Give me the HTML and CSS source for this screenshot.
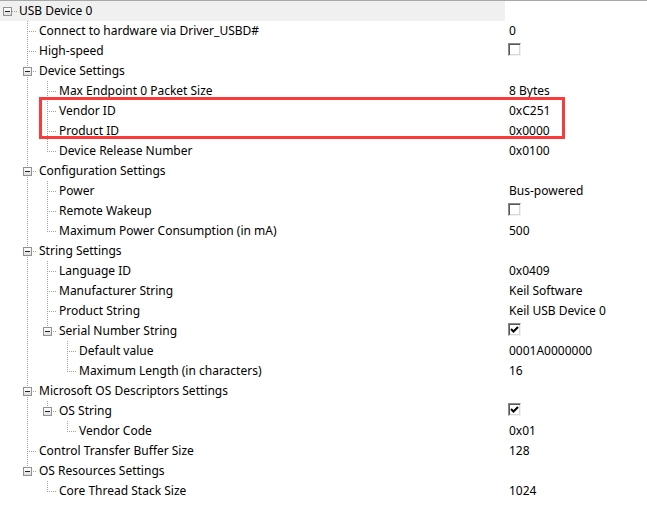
FILE: index.html
```html
<!DOCTYPE html>
<html>
<head>
<meta charset="utf-8">
<link rel="stylesheet" href="styles.css">
</head>
<body>
<div class="grid">
  <div class="row root">
    <div class="left"><span class="c0"><span class="box"></span></span><span class="lbl">USB Device 0</span></div>
    <div class="val"></div>
  </div>
  <div class="row"><div class="left"><span class="s0"></span><span class="n"></span><span class="lbl">Connect to hardware via Driver_USBD#</span></div><div class="val">0</div></div>
  <div class="row"><div class="left"><span class="s0"></span><span class="n"></span><span class="lbl">High-speed</span></div><div class="val"><span class="chk"></span></div></div>
  <div class="row"><div class="left"><span class="s0"></span><span class="n"><span class="box"></span></span><span class="lbl">Device Settings</span></div><div class="val"></div></div>
  <div class="row"><div class="left"><span class="s0"></span><span class="g v"></span><span class="n"></span><span class="lbl">Max Endpoint 0 Packet Size</span></div><div class="val">8 Bytes</div></div>
  <div class="row"><div class="left"><span class="s0"></span><span class="g v"></span><span class="n"></span><span class="lbl">Vendor ID</span></div><div class="val">0xC251</div></div>
  <div class="row"><div class="left"><span class="s0"></span><span class="g v"></span><span class="n"></span><span class="lbl">Product ID</span></div><div class="val">0x0000</div></div>
  <div class="row"><div class="left"><span class="s0"></span><span class="g v"></span><span class="n last"></span><span class="lbl">Device Release Number</span></div><div class="val">0x0100</div></div>
  <div class="row"><div class="left"><span class="s0"></span><span class="n"><span class="box"></span></span><span class="lbl">Configuration Settings</span></div><div class="val"></div></div>
  <div class="row"><div class="left"><span class="s0"></span><span class="g v"></span><span class="n"></span><span class="lbl">Power</span></div><div class="val">Bus-powered</div></div>
  <div class="row"><div class="left"><span class="s0"></span><span class="g v"></span><span class="n"></span><span class="lbl">Remote Wakeup</span></div><div class="val"><span class="chk"></span></div></div>
  <div class="row"><div class="left"><span class="s0"></span><span class="g v"></span><span class="n last"></span><span class="lbl">Maximum Power Consumption (in mA)</span></div><div class="val">500</div></div>
  <div class="row"><div class="left"><span class="s0"></span><span class="n"><span class="box"></span></span><span class="lbl">String Settings</span></div><div class="val"></div></div>
  <div class="row"><div class="left"><span class="s0"></span><span class="g v"></span><span class="n"></span><span class="lbl">Language ID</span></div><div class="val">0x0409</div></div>
  <div class="row"><div class="left"><span class="s0"></span><span class="g v"></span><span class="n"></span><span class="lbl">Manufacturer String</span></div><div class="val">Keil Software</div></div>
  <div class="row"><div class="left"><span class="s0"></span><span class="g v"></span><span class="n"></span><span class="lbl">Product String</span></div><div class="val">Keil USB Device 0</div></div>
  <div class="row"><div class="left"><span class="s0"></span><span class="g v"></span><span class="n last"><span class="box"></span></span><span class="lbl">Serial Number String</span></div><div class="val"><span class="chk on"><svg width="9" height="9" viewBox="0 0 9 9"><path d="M1 4 L3.5 6.5 L8 2" fill="none" stroke="#000" stroke-width="2"/></svg></span></div></div>
  <div class="row"><div class="left"><span class="s0"></span><span class="g v"></span><span class="g"></span><span class="n"></span><span class="lbl">Default value</span></div><div class="val">0001A0000000</div></div>
  <div class="row"><div class="left"><span class="s0"></span><span class="g v"></span><span class="g"></span><span class="n last"></span><span class="lbl">Maximum Length (in characters)</span></div><div class="val">16</div></div>
  <div class="row"><div class="left"><span class="s0"></span><span class="n"><span class="box"></span></span><span class="lbl">Microsoft OS Descriptors Settings</span></div><div class="val"></div></div>
  <div class="row"><div class="left"><span class="s0"></span><span class="g v"></span><span class="n last"><span class="box"></span></span><span class="lbl">OS String</span></div><div class="val"><span class="chk on"><svg width="9" height="9" viewBox="0 0 9 9"><path d="M1 4 L3.5 6.5 L8 2" fill="none" stroke="#000" stroke-width="2"/></svg></span></div></div>
  <div class="row"><div class="left"><span class="s0"></span><span class="g v"></span><span class="g"></span><span class="n last"></span><span class="lbl">Vendor Code</span></div><div class="val">0x01</div></div>
  <div class="row"><div class="left"><span class="s0"></span><span class="n"></span><span class="lbl">Control Transfer Buffer Size</span></div><div class="val">128</div></div>
  <div class="row"><div class="left"><span class="s0"></span><span class="n last"><span class="box"></span></span><span class="lbl">OS Resources Settings</span></div><div class="val"></div></div>
  <div class="row"><div class="left"><span class="s0"></span><span class="g"></span><span class="n last"></span><span class="lbl">Core Thread Stack Size</span></div><div class="val">1024</div></div>
  <div class="mark"></div>
</div>
</body>
</html>
```
FILE: styles.css
```css
html, body {
  margin: 0;
  padding: 0;
  background: #fff;
}
body {
  width: 647px;
  height: 523px;
  overflow: hidden;
  font-family: "Noto Sans", "Open Sans", sans-serif;
  font-size: 12px;
  color: #000;
}
.grid {
  position: relative;
  border-top: 1px solid #a8a8a8;
}
.row {
  display: grid;
  grid-template-columns: 505px 1fr;
  height: 20px;
  line-height: 20px;
}
.left {
  display: flex;
  align-items: flex-start;
  height: 20px;
  white-space: nowrap;
}
.root .left {
  background: #f0f0f0;
}
.val {
  padding-left: 4px;
  white-space: nowrap;
}
.lbl {
  padding-left: 2px;
}
.s0 {
  flex: none;
  width: 17px;
  height: 20px;
}
.c0 {
  flex: none;
  width: 17px;
  height: 20px;
  display: flex;
  background-image: repeating-linear-gradient(to right, #a0a0a0 0 1px, transparent 1px 2px);
  background-repeat: no-repeat;
  background-position: 12px 10px;
  background-size: 5px 1px;
}
.c0 .box {
  margin-left: 3px;
}
.g {
  flex: none;
  width: 20px;
  height: 20px;
}
.g.v {
  background-image: repeating-linear-gradient(to bottom, #a0a0a0 0 1px, transparent 1px 2px);
  background-repeat: no-repeat;
  background-position: 10px 0;
  background-size: 1px 20px;
}
.n {
  flex: none;
  width: 20px;
  height: 20px;
  display: flex;
  background-image:
    repeating-linear-gradient(to right, #a0a0a0 0 1px, transparent 1px 2px),
    repeating-linear-gradient(to bottom, #a0a0a0 0 1px, transparent 1px 2px);
  background-repeat: no-repeat, no-repeat;
  background-position: 12px 10px, 10px 0;
  background-size: 8px 1px, 1px 20px;
}
.n.last {
  background-size: 8px 1px, 1px 11px;
}
.box {
  flex: none;
  box-sizing: border-box;
  width: 9px;
  height: 9px;
  margin-left: 6px;
  margin-top: 6px;
  border: 1px solid #919191;
  background:
    linear-gradient(#222, #222) center / 5px 1px no-repeat,
    linear-gradient(180deg, #ffffff, #dedede);
}
.chk {
  display: inline-flex;
  align-items: center;
  justify-content: center;
  box-sizing: border-box;
  width: 13px;
  height: 13px;
  margin-left: -1px;
  margin-top: 2px;
  vertical-align: top;
  border: 1px solid;
  border-color: #8a8a8a #f0f0f0 #f0f0f0 #8a8a8a;
  box-shadow: inset 1px 1px 0 #5a5a5a, inset -1px -1px 0 #d8d8d8;
  background: #fff;
}
.chk svg {
  display: block;
}
.mark {
  position: absolute;
  left: 39px;
  top: 96px;
  width: 526px;
  height: 42px;
  box-sizing: border-box;
  border: 3px solid #fb3a3a;
}
```
